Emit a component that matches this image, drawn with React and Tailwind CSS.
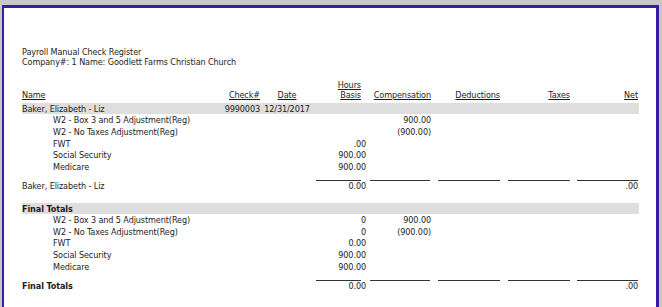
import React from "react";

const GRID = "grid grid-cols-[200px_40px_50px_54px_66px_69px_70px_68px] w-[617px]";

const detail1 = [
  { name: "W2 - Box 3 and 5 Adjustment(Reg)", hours: "", comp: "900.00" },
  { name: "W2 - No Taxes Adjustment(Reg)", hours: "", comp: "(900.00)" },
  { name: "FWT", hours: ".00", comp: "" },
  { name: "Social Security", hours: "900.00", comp: "" },
  { name: "Medicare", hours: "900.00", comp: "" },
];

const detail2 = [
  { name: "W2 - Box 3 and 5 Adjustment(Reg)", hours: "0", comp: "900.00" },
  { name: "W2 - No Taxes Adjustment(Reg)", hours: "0", comp: "(900.00)" },
  { name: "FWT", hours: "0.00", comp: "" },
  { name: "Social Security", hours: "900.00", comp: "" },
  { name: "Medicare", hours: "900.00", comp: "" },
];

function DetailRows({ rows }) {
  return (
    <div className="pt-[1px] pb-[0px]">
      {rows.map((r, i) => (
        <div key={i} className={`${GRID} h-[11.75px] leading-[11.75px]`}>
          <div className="pl-[31px] whitespace-nowrap">{r.name}</div>
          <div />
          <div />
          <div className="text-right">{r.hours}</div>
          <div className="text-right pr-[1px]">{r.comp}</div>
          <div />
          <div />
          <div />
        </div>
      ))}
    </div>
  );
}

function TotalRow({ label, bold }) {
  return (
    <div className={`${GRID}`}>
      <div className={`pt-[1px] leading-[10px] ${bold ? "font-bold" : ""}`}>{label}</div>
      <div />
      <div />
      <div>
        <div className="ml-[4px] mr-[5px] border-t border-[#333]" />
        <div className="text-right leading-[10px]">0.00</div>
      </div>
      <div>
        <div className="ml-[4px] mr-[2px] border-t border-[#333]" />
      </div>
      <div>
        <div className="ml-[6px] mr-[1px] border-t border-[#333]" />
      </div>
      <div>
        <div className="ml-[7px] mr-[1px] border-t border-[#333]" />
      </div>
      <div>
        <div className="ml-[6px] mr-[1px] border-t border-[#333]" />
        <div className="text-right pr-[1px] leading-[10px]">.00</div>
      </div>
    </div>
  );
}

export default function App() {
  return (
    <div className="w-[662px] h-[307px] overflow-hidden bg-[#c8c8c8] pt-[5px] pl-[2px] pr-[3px]">
      <div
        className="h-[302px] bg-white border-l-2 border-t-[3px] border-r-[3px] border-[#3a1c9e] pl-[18px] pt-[39px] text-[9px] tracking-[-0.1px] text-[#1c1c1c]"
        style={{ fontFamily: '"DejaVu Sans Condensed", "DejaVu Sans", sans-serif' }}
      >
        <div className="leading-[10px]">Payroll Manual Check Register</div>
        <div className="leading-[10px]">Company#: 1 Name: Goodlett Farms Christian Church</div>

        <div className={`${GRID} mt-[13px] leading-[10px]`}>
          <div className="self-end underline">Name</div>
          <div className="self-end text-right pr-[2px] underline">Check#</div>
          <div className="self-end text-center underline">Date</div>
          <div className="text-right pr-[5px] underline">
            <div>Hours</div>
            <div>Basis</div>
          </div>
          <div className="self-end text-right pr-[1px] underline">Compensation</div>
          <div className="self-end text-right pr-[1px] underline">Deductions</div>
          <div className="self-end text-right pr-[1px] underline">Taxes</div>
          <div className="self-end text-right pr-[1px] underline">Net</div>
        </div>

        <div className={`${GRID} mt-[3px] h-[11px] leading-[12px] bg-[#dedede]`}>
          <div>Baker, Elizabeth - Liz</div>
          <div className="text-right pr-[2px]">9990003</div>
          <div className="text-center whitespace-nowrap">12/31/2017</div>
          <div />
          <div />
          <div />
          <div />
          <div />
        </div>
        <DetailRows rows={detail1} />
        <div className="h-[6px]" />
        <TotalRow label="Baker, Elizabeth - Liz" />

        <div className={`${GRID} mt-[12px] h-[11px] leading-[12px] bg-[#dedede] font-bold`}>
          <div>Final Totals</div>
          <div />
          <div />
          <div />
          <div />
          <div />
          <div />
          <div />
        </div>
        <DetailRows rows={detail2} />
        <div className="h-[6px]" />
        <TotalRow label="Final Totals" bold />
      </div>
    </div>
  );
}
